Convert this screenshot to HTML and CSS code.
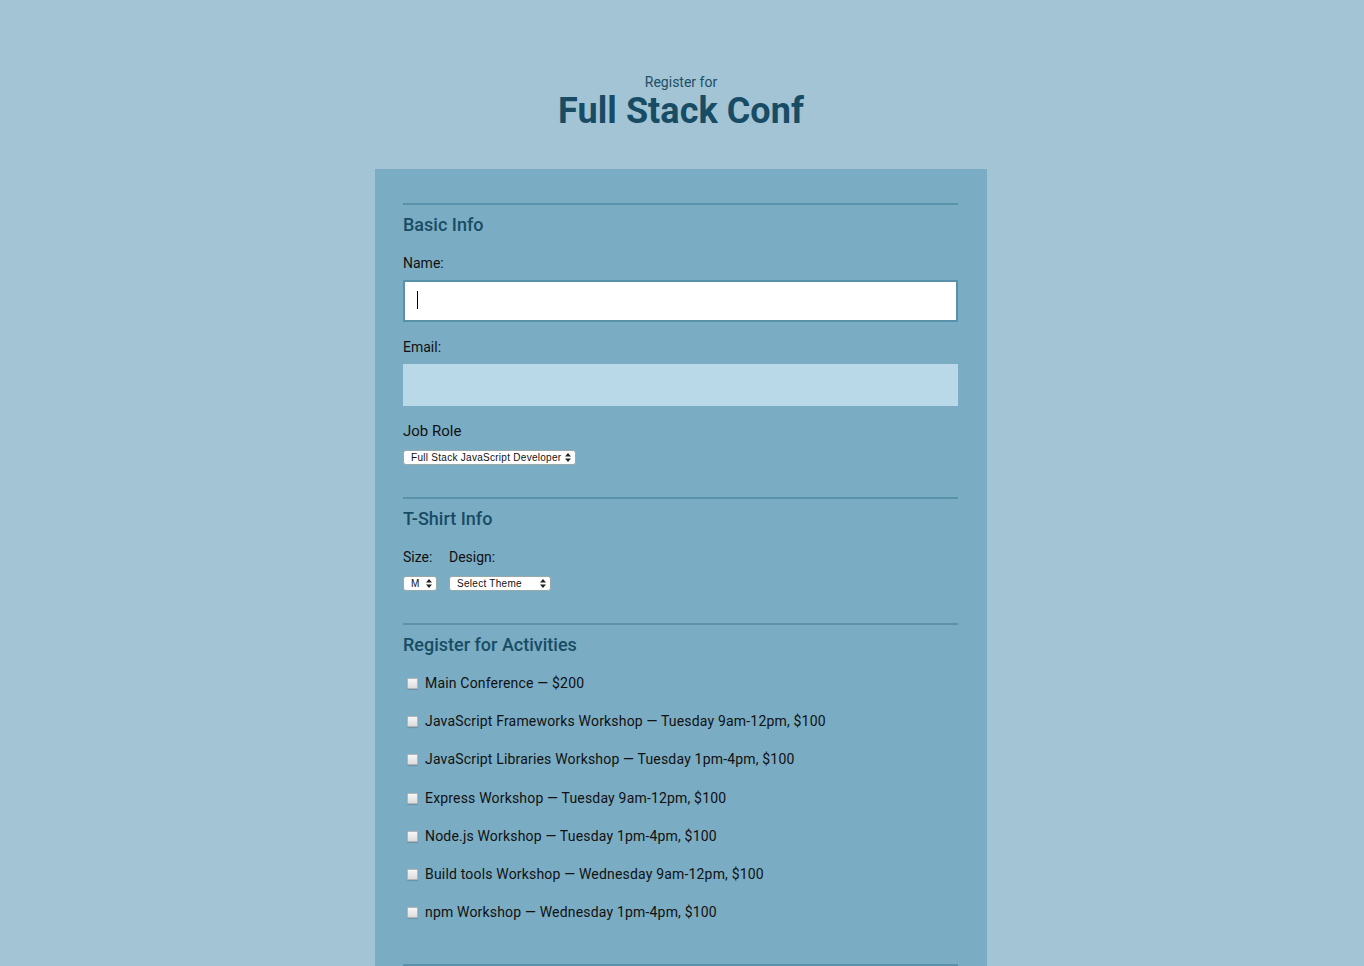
FILE: index.html
```html
<!DOCTYPE html>
<html lang="en">
<head>
<meta charset="utf-8">
<title>Full Stack Conf</title>
<link rel="stylesheet" href="styles.css">
</head>
<body>
<header class="header">
  <p class="kicker">Register for</p>
  <h1 class="title">Full Stack Conf</h1>
</header>
<form class="form">
  <fieldset class="section">
    <h2 class="section-title">Basic Info</h2>
    <label class="label label-first" for="name">Name:</label>
    <div class="text-input focused" id="name"><span class="caret"></span></div>
    <label class="label" for="mail">Email:</label>
    <div class="text-input muted" id="mail"></div>
    <label class="label label-job" for="title">Job Role</label>
    <div class="select select-job">
      <span class="select-text">Full Stack JavaScript Developer</span>
      <svg class="arrows" width="6" height="9" viewBox="0 0 6 9"><path d="M0 3.5 L3 0 L6 3.5 Z M0 5.5 L3 9 L6 5.5 Z" fill="#222"/></svg>
    </div>
  </fieldset>
  <fieldset class="section">
    <h2 class="section-title">T-Shirt Info</h2>
    <div class="shirt-row">
      <div class="shirt-col">
        <span class="label label-first">Size:</span>
        <div class="select select-size">
          <span class="select-text">M</span>
          <svg class="arrows" width="6" height="9" viewBox="0 0 6 9"><path d="M0 3.5 L3 0 L6 3.5 Z M0 5.5 L3 9 L6 5.5 Z" fill="#222"/></svg>
        </div>
      </div>
      <div class="shirt-col">
        <span class="label label-first">Design:</span>
        <div class="select select-design">
          <span class="select-text">Select Theme</span>
          <svg class="arrows" width="6" height="9" viewBox="0 0 6 9"><path d="M0 3.5 L3 0 L6 3.5 Z M0 5.5 L3 9 L6 5.5 Z" fill="#222"/></svg>
        </div>
      </div>
    </div>
  </fieldset>
  <fieldset class="section section-last">
    <h2 class="section-title">Register for Activities</h2>
    <ul class="activities">
      <li class="activity"><span class="check"></span>Main Conference — $200</li>
      <li class="activity"><span class="check"></span>JavaScript Frameworks Workshop — Tuesday 9am-12pm, $100</li>
      <li class="activity"><span class="check"></span>JavaScript Libraries Workshop — Tuesday 1pm-4pm, $100</li>
      <li class="activity"><span class="check"></span>Express Workshop — Tuesday 9am-12pm, $100</li>
      <li class="activity"><span class="check"></span>Node.js Workshop — Tuesday 1pm-4pm, $100</li>
      <li class="activity"><span class="check"></span>Build tools Workshop — Wednesday 9am-12pm, $100</li>
      <li class="activity"><span class="check"></span>npm Workshop — Wednesday 1pm-4pm, $100</li>
    </ul>
  </fieldset>
  <fieldset class="section section-next"></fieldset>
</form>
</body>
</html>
```

FILE: styles.css
```css
* { box-sizing: border-box; }
html, body {
  margin: 0;
  padding: 0;
  background: #a2c4d5;
  font-family: Roboto, "Liberation Sans", Arial, sans-serif;
  color: #111;
  overflow: hidden;
  height: 966px;
}
body { padding-right: 2px; }
.header {
  text-align: center;
  padding-top: 73px;
}
.kicker {
  margin: 0;
  font-size: 14px;
  line-height: 18px;
  color: #1d4f66;
}
.title {
  margin: 0;
  font-size: 36px;
  line-height: 40px;
  font-weight: 700;
  color: #184c64;
  letter-spacing: 0.05px;
}
.form {
  width: 612px;
  margin: 38px auto 0;
  background: #7aacc3;
  padding: 34px 29px 0 28px;
  min-height: 900px;
}
.section {
  margin: 0;
  padding: 0 0 32px;
  border: 0;
  border-top: 2px solid #5a92ab;
  min-width: 0;
}
.section-last { padding-bottom: 43px; }
.section-next { padding: 0; height: 20px; }
.section-title {
  margin: 9px 0 0;
  font-size: 18px;
  line-height: 22px;
  font-weight: 500;
  color: #184c64;
}
.label {
  display: block;
  font-size: 14px;
  line-height: 18px;
  margin-top: 16px;
  color: #111;
}
.label-first { margin-top: 18px; }
.label-job { font-size: 15px; }
.text-input {
  margin-top: 8px;
  height: 42px;
  width: 100%;
}
.focused {
  background: #fff;
  border: 2px solid #5a91aa;
  padding: 9px 12px;
}
.caret {
  display: block;
  width: 1px;
  height: 18px;
  background: #000;
}
.muted { background: #b9d9e8; }
.select {
  margin-top: 10px;
  height: 15px;
  background: #fff;
  border: 1px solid #9aa;
  border-radius: 3px;
  display: flex;
  align-items: center;
  justify-content: space-between;
  padding: 0 4px 0 7px;
  font-size: 10px;
  letter-spacing: 0.28px;
  color: #111;
  font-family: "Liberation Sans", Arial, sans-serif;
}
.select-job { width: 173px; }
.select-size { width: 34px; }
.select-design { width: 102px; }
.shirt-row {
  display: flex;
  gap: 12px;
}
.shirt-col { display: flex; flex-direction: column; align-items: flex-start; }
.activities {
  list-style: none;
  margin: 18px 0 0;
  padding: 0;
  display: flex;
  flex-direction: column;
  gap: 20.2px;
}
.activity {
  font-size: 14px;
  line-height: 18px;
  letter-spacing: 0.18px;
  display: flex;
  align-items: center;
  color: #111;
}
.check {
  width: 11px;
  height: 11px;
  margin: 1px 7px 0 4px;
  border: 1px solid #b5b5b5;
  border-radius: 1px;
  background: linear-gradient(#f6f6f6, #dcdcdc);
  box-shadow: 0 1px 1px rgba(0,0,0,0.15);
}
```
